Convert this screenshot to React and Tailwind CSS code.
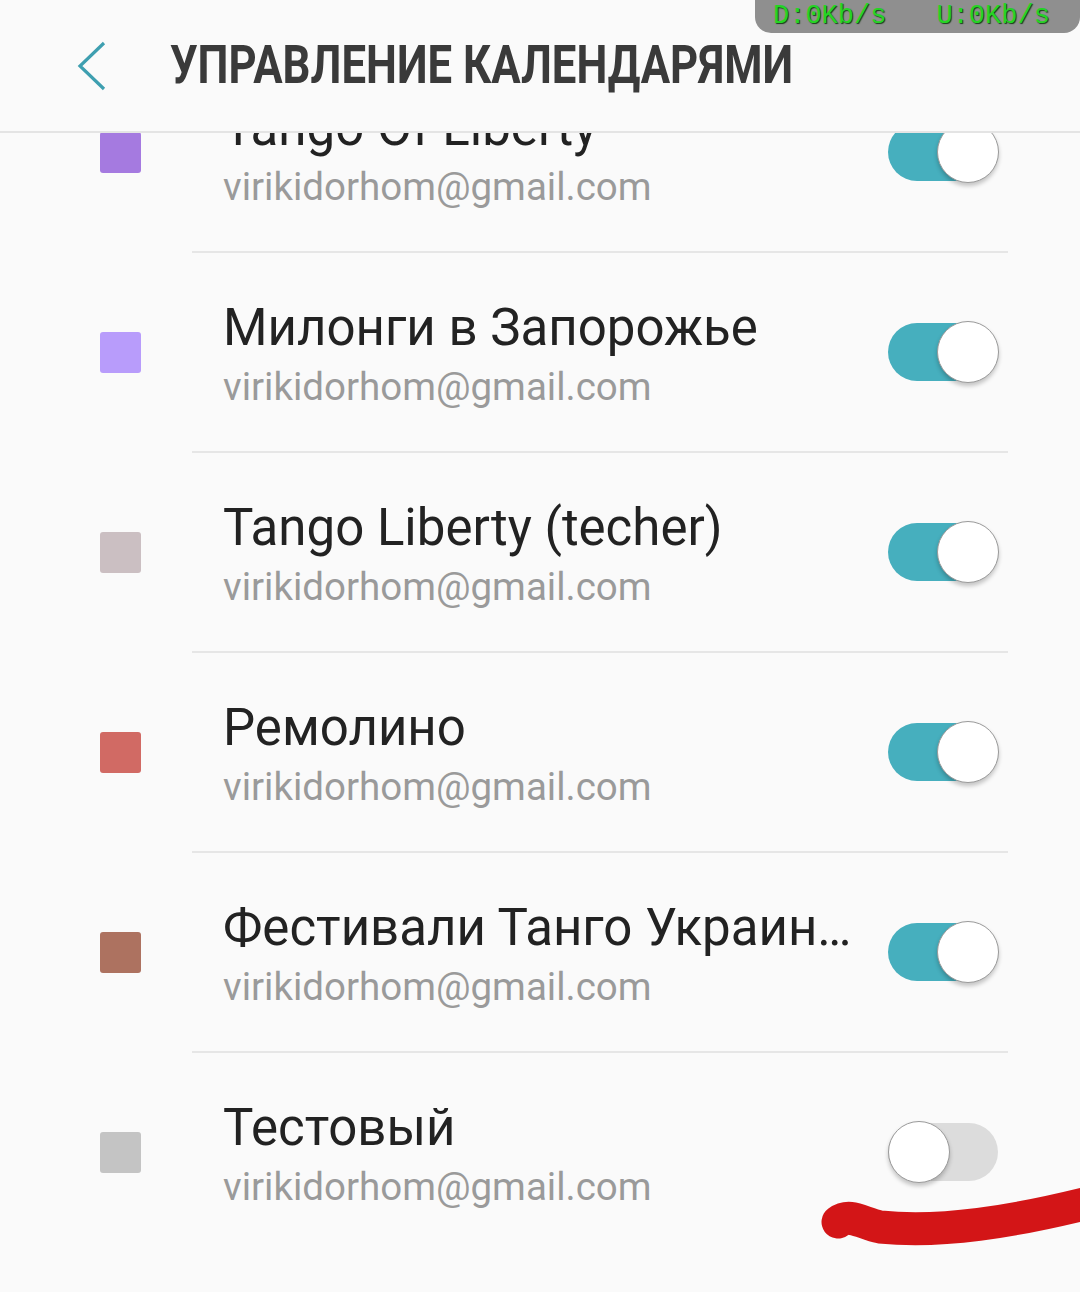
import React from "react";

const calendars = [
    { name: "Tango Of Liberty", color: "bg-[#a57ae0]", on: true },
    { name: "Милонги в Запорожье", color: "bg-[#b89cfb]", on: true },
    { name: "Tango Liberty (techer)", color: "bg-[#cbbfc2]", on: true },
    { name: "Ремолино", color: "bg-[#d16a64]", on: true },
    { name: "Фестивали Танго Украины", color: "bg-[#ad7260]", on: true },
    { name: "Тестовый", color: "bg-[#c4c4c4]", on: false },
];

const Toggle = ({ on }) => (
    <div className={`relative w-[110px] h-[58px] rounded-full shrink-0 ${on ? "bg-[#46afbe]" : "bg-[#dcdcdc]"}`}>
        <div
            className={`absolute top-[-2px] w-[62px] h-[62px] rounded-full bg-white border border-[#9a9a9a] shadow-[0_3px_4px_rgba(0,0,0,0.22)] ${on ? "right-[-1px]" : "left-0"}`}
        />
    </div>
);

const Row = ({ item, last }) => (
    <div>
        <div className="h-[198px] flex items-center pl-[100px] pr-[82px]">
            <div className={`w-[41px] h-[41px] rounded-[3px] shrink-0 ${item.color}`} />
            <div className="self-start pt-[45px] ml-[82px] flex-1 min-w-0 pr-[36px]">
                <div className="text-[51px] leading-[60px] text-[#222222] truncate">{item.name}</div>
                <div className="mt-[5px] text-[38.5px] leading-[48px] text-[#9a9a9a]">virikidorhom@gmail.com</div>
            </div>
            <Toggle on={item.on} />
        </div>
        {!last && <div className="ml-[192px] mr-[72px] h-[2px] bg-[#e6e6e6]" />}
    </div>
);

export default function App() {
    return (
        <div className="relative h-[1292px] overflow-hidden bg-[#fafafa] font-['Roboto','Noto_Sans',sans-serif]">
            <div className="h-[133px] flex items-center bg-[#fafafa] border-b-2 border-[#e4e4e4] relative z-10">
                <svg className="ml-[72px] w-[40px] h-[52px]" viewBox="0 0 40 52">
                    <path d="M32 3 L8 26 L32 49" fill="none" stroke="#3e9fb0" strokeWidth="3.2" />
                </svg>
                <div className="ml-[58px] origin-left scale-x-[0.81] whitespace-nowrap text-[54px] font-bold text-[#3a3a3a] leading-none pb-[2px]">
                    УПРАВЛЕНИЕ КАЛЕНДАРЯМИ
                </div>
            </div>

            <div className="overflow-hidden h-[1159px]">
                <div className="-mt-[80px]">
                    {calendars.map((c, i) => (
                        <Row key={c.name} item={c} last={i === calendars.length - 1} />
                    ))}
                </div>
            </div>

            <div className="absolute top-0 right-0 w-[325px] h-[33px] rounded-b-[16px] bg-[#8f8f8f] flex items-center gap-[50px] pl-[18px] z-20 font-['Liberation_Mono',monospace] text-[27px] leading-none text-[#25d425] [text-shadow:1px_1px_1px_#174017]">
                <span>D:0Kb/s</span>
                <span>U:0Kb/s</span>
            </div>

            <svg className="absolute inset-0 w-[1080px] h-[1292px] pointer-events-none z-30" viewBox="0 0 1080 1292">
                <path
                    d="M838 1222 C 850 1213, 862 1223, 880 1227 C 940 1233, 1010 1223, 1100 1200"
                    fill="none"
                    stroke="#d31517"
                    strokeWidth="33"
                    strokeLinecap="round"
                />
            </svg>
        </div>
    );
}
